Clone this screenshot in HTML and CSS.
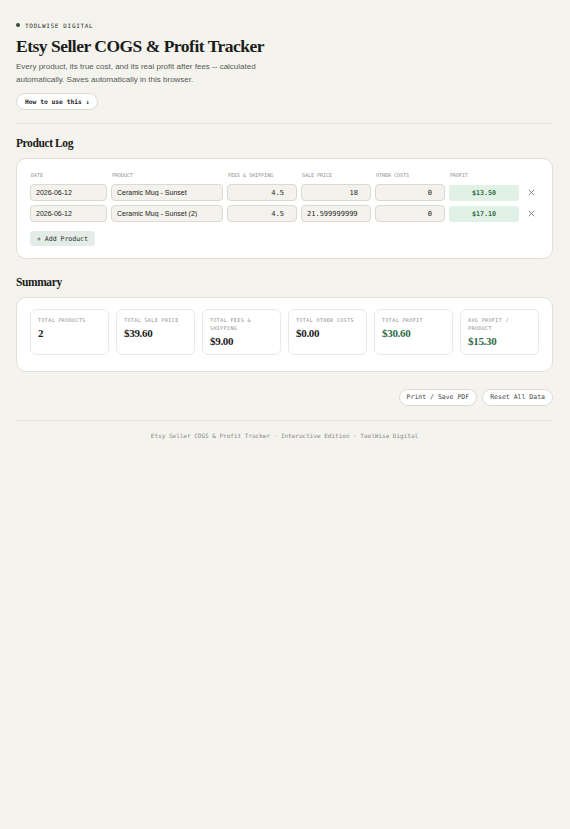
FILE: index.html
```html
<!DOCTYPE html>
<html lang="en">
    <head>
        <meta charset="UTF-8">
        <title>Etsy Seller COGS &amp; Profit Tracker</title>
        <link rel="stylesheet" href="styles.css">
    </head>
    <body>
        <div class="page">
            <header class="top">
                <div class="brand"><span class="brand_dot"></span>TOOLWISE DIGITAL</div>
                <h1>Etsy Seller COGS &amp; Profit Tracker</h1>
                <p class="intro">Every product, its true cost, and its real profit after fees -- calculated automatically. Saves automatically in this browser.</p>
                <button class="pill pill_bold">How to use this ↓</button>
            </header>

            <section class="block">
                <h2>Product Log</h2>
                <div class="card">
                    <div class="log">
                        <div class="log_head">Date</div>
                        <div class="log_head">Product</div>
                        <div class="log_head">Fees &amp; Shipping</div>
                        <div class="log_head">Sale Price</div>
                        <div class="log_head">Other Costs</div>
                        <div class="log_head">Profit</div>
                        <div></div>

                        <input class="field" type="text" value="2026-06-12">
                        <input class="field" type="text" value="Ceramic Mug - Sunset">
                        <input class="field num" type="text" value="4.5">
                        <input class="field num" type="text" value="18">
                        <input class="field num" type="text" value="0">
                        <div class="profit">$13.50</div>
                        <button class="del"><svg width="7" height="7" viewBox="0 0 7 7"><path d="M0.8 0.8 L6.2 6.2 M6.2 0.8 L0.8 6.2" stroke="#7a7c79" stroke-width="0.9" fill="none"/></svg></button>

                        <input class="field" type="text" value="2026-06-12">
                        <input class="field" type="text" value="Ceramic Mug - Sunset (2)">
                        <input class="field num" type="text" value="4.5">
                        <input class="field num" type="text" value="21.599999999999998">
                        <input class="field num" type="text" value="0">
                        <div class="profit">$17.10</div>
                        <button class="del"><svg width="7" height="7" viewBox="0 0 7 7"><path d="M0.8 0.8 L6.2 6.2 M6.2 0.8 L0.8 6.2" stroke="#7a7c79" stroke-width="0.9" fill="none"/></svg></button>
                    </div>
                    <button class="add">+ Add Product</button>
                </div>
            </section>

            <section class="block">
                <h2>Summary</h2>
                <div class="card card_sum">
                    <div class="stats">
                        <div class="stat">
                            <div class="stat_label">Total Products</div>
                            <div class="stat_val">2</div>
                        </div>
                        <div class="stat">
                            <div class="stat_label">Total Sale Price</div>
                            <div class="stat_val">$39.60</div>
                        </div>
                        <div class="stat">
                            <div class="stat_label">Total Fees &amp; Shipping</div>
                            <div class="stat_val">$9.00</div>
                        </div>
                        <div class="stat">
                            <div class="stat_label">Total Other Costs</div>
                            <div class="stat_val">$0.00</div>
                        </div>
                        <div class="stat">
                            <div class="stat_label">Total Profit</div>
                            <div class="stat_val good">$30.60</div>
                        </div>
                        <div class="stat">
                            <div class="stat_label">Avg Profit / Product</div>
                            <div class="stat_val good">$15.30</div>
                        </div>
                    </div>
                </div>
            </section>

            <div class="actions">
                <button class="pill">Print / Save PDF</button>
                <button class="pill">Reset All Data</button>
            </div>

            <footer class="foot">Etsy Seller COGS &amp; Profit Tracker · Interactive Edition · ToolWise Digital</footer>
        </div>
    </body>
</html>
```

FILE: styles.css
```css
body{
    margin: 0;
    background-color: #f4f3ee;
    color: #1c1f1c;
    font-family: "Liberation Sans", Arial, sans-serif;
}

.page{
    padding: 21px 17px 40px 16px;
}

.brand{
    display: flex;
    align-items: center;
    gap: 5px;
    height: 8px;
    font-family: "DejaVu Sans Mono", monospace;
    font-size: 6px;
    letter-spacing: 0.65px;
    color: #2a2d2a;
}

.brand_dot{
    width: 4px;
    height: 4px;
    border-radius: 50%;
    background-color: #2f4a3a;
}

h1{
    font-family: "Liberation Serif", serif;
    font-size: 17.5px;
    line-height: 21px;
    letter-spacing: -0.5px;
    margin: 6.5px 0 0 0;
    color: #1a1c1a;
}

.intro{
    font-size: 8px;
    line-height: 13px;
    color: #555a55;
    max-width: 270px;
    margin: 3px 0 7.5px 0;
}

.pill{
    box-sizing: border-box;
    height: 17px;
    font-family: "DejaVu Sans Mono", monospace;
    font-size: 6.5px;
    color: #444;
    background-color: #fff;
    border: 1px solid #dddad1;
    border-radius: 9px;
    padding: 0 7px;
    cursor: pointer;
}

.pill_bold{
    display: block;
    font-size: 6.3px;
    font-weight: bold;
    color: #1e211e;
    padding: 0 8px;
}

.top{
    padding-bottom: 12.5px;
    border-bottom: 1px solid #e3e1da;
}

h2{
    font-family: "Liberation Serif", serif;
    font-size: 11.5px;
    line-height: 14px;
    letter-spacing: -0.4px;
    margin: 0 0 7.5px 0;
    color: #1a1c1a;
}

.block{
    margin-top: 12.5px;
}

.block + .block{
    margin-top: 16.5px;
}

.card{
    background-color: #fff;
    border: 1.5px solid #e2dfd5;
    border-radius: 10px;
    padding: 13px 13px 11.5px 13px;
}

.log{
    display: grid;
    grid-template-columns: 1.1fr 1.6fr 1fr 1fr 1fr 1fr 16px;
    gap: 4px;
    align-items: center;
}

.log_head{
    font-family: "DejaVu Sans Mono", monospace;
    font-size: 5px;
    line-height: 7px;
    text-transform: uppercase;
    color: #8d8f8c;
    padding-left: 1px;
    margin-bottom: 1.5px;
}

.field{
    box-sizing: border-box;
    width: 100%;
    height: 17px;
    min-width: 0;
    background-color: #f4f2ec;
    border: 1px solid #dcd9d0;
    border-radius: 4px;
    padding: 0 5px;
    font-family: "Liberation Sans", Arial, sans-serif;
    font-size: 7px;
    line-height: 14px;
    color: #222;
}

.num{
    font-family: "DejaVu Sans Mono", monospace;
    text-align: right;
    padding-right: 12px;
}

.profit{
    height: 16px;
    line-height: 16px;
    background-color: #e1f1e6;
    border-radius: 3px;
    text-align: center;
    font-family: "DejaVu Sans Mono", monospace;
    font-size: 6.7px;
    font-weight: bold;
    color: #2f6b47;
}

.del{
    display: flex;
    justify-content: center;
    background: none;
    border: none;
    padding: 0;
    cursor: pointer;
}

.add{
    display: block;
    margin-top: 9px;
    height: 15px;
    font-family: "DejaVu Sans Mono", monospace;
    font-size: 6.5px;
    color: #2a2d2a;
    background-color: #e4ece7;
    border: none;
    border-radius: 4px;
    padding: 0 7px;
}

.card_sum{
    padding: 11.5px 13px 15.5px 13px;
}

.stats{
    display: grid;
    grid-template-columns: repeat(6, 1fr);
    gap: 7px;
}

.stat{
    box-sizing: border-box;
    height: 46px;
    border: 1px solid #ebe9e3;
    border-radius: 6px;
    padding: 6px 7px;
}

.stat_label{
    font-family: "DejaVu Sans Mono", monospace;
    font-size: 5px;
    line-height: 8px;
    letter-spacing: 0.4px;
    text-transform: uppercase;
    color: #8d8f8c;
}

.stat_val{
    font-family: "Liberation Serif", serif;
    font-weight: bold;
    font-size: 11px;
    line-height: 13px;
    letter-spacing: -0.3px;
    margin-top: 3px;
    color: #1d211d;
}

.good{
    color: #2f6b47;
}

.actions{
    display: flex;
    justify-content: flex-end;
    gap: 5px;
    margin-top: 17px;
    padding-bottom: 14.5px;
    border-bottom: 1px solid #e3e1da;
}

.foot{
    text-align: center;
    font-family: "DejaVu Sans Mono", monospace;
    font-size: 6px;
    line-height: 8px;
    color: #8a8c89;
    margin-top: 10.5px;
}
```
